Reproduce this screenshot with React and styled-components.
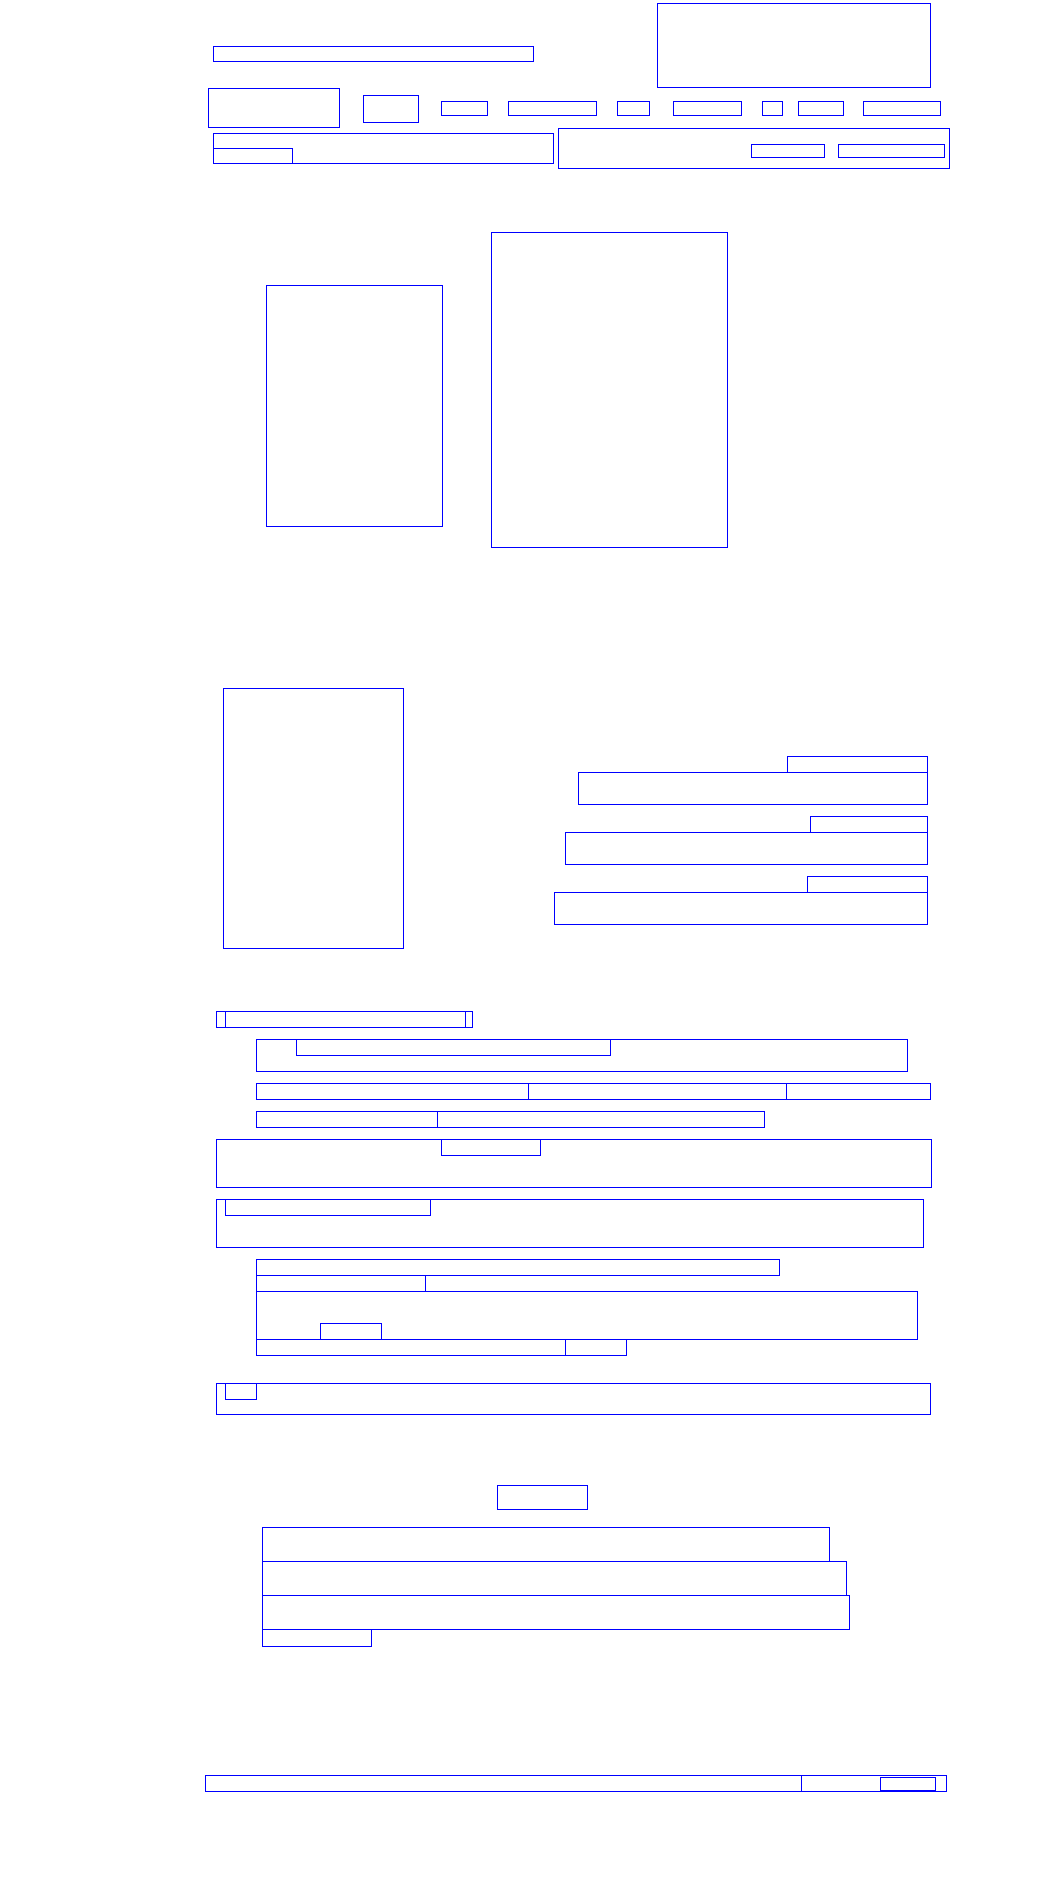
import styled, { createGlobalStyle, css } from 'styled-components';

const LINE = '#0000ff';

const outlined = css`
  border: 1px solid ${LINE};
`;

const GlobalStyle = createGlobalStyle`
  * { box-sizing: border-box; }
  html, body {
    margin: 0;
    padding: 0;
    background: #ffffff;
    font-family: 'Liberation Sans', Arial, sans-serif;
  }
`;

const Page = styled.div`
  width: 745px;
  margin-left: 205px;
  display: flex;
  flex-direction: column;
  align-items: flex-start;
`;

/* header */
const Masthead = styled.header`
  display: flex;
  align-items: flex-start;
  height: 88px;
`;
const SiteTitle = styled.div`
  ${outlined};
  margin: 46px 0 0 8px;
  width: 321px;
  height: 16px;
`;
const Banner = styled.div`
  ${outlined};
  margin: 3px 0 0 123px;
  width: 274px;
  height: 85px;
`;

const NavBar = styled.nav`
  display: flex;
  align-items: flex-start;
  height: 40px;
`;
const Logo = styled.div`
  ${outlined};
  margin-left: 3px;
  width: 132px;
  height: 40px;
`;
const SearchButton = styled.div`
  ${outlined};
  margin: 7px 0 0 23px;
  width: 56px;
  height: 28px;
`;
const NavLinks = styled.div`
  display: flex;
  margin-top: 13px;
`;
const NavLink = styled.a`
  ${outlined};
  display: block;
  margin-left: ${({ $gap }) => $gap}px;
  width: ${({ $w }) => $w}px;
  height: 15px;
`;

const SubBar = styled.div`
  display: flex;
  align-items: flex-start;
`;
const Breadcrumb = styled.div`
  ${outlined};
  display: flex;
  align-items: flex-end;
  margin: 5px 0 0 8px;
  width: 341px;
  height: 31px;
`;
const Crumb = styled.span`
  ${outlined};
  margin: 0 0 -1px -1px;
  width: 80px;
  height: 16px;
`;
const Toolbar = styled.div`
  ${outlined};
  display: flex;
  justify-content: flex-end;
  align-items: flex-start;
  gap: 13px;
  margin-left: 4px;
  padding: 15px 4px 0 0;
  width: 392px;
  height: 41px;
`;
const ToolButton = styled.button`
  ${outlined};
  background: none;
  padding: 0;
  width: ${({ $w }) => $w}px;
  height: 14px;
`;

/* gallery */
const Gallery = styled.section`
  display: flex;
  align-items: flex-start;
  margin-top: 63px;
`;
const Photo = styled.div`
  ${outlined};
  flex: none;
`;
const SmallPhoto = styled(Photo)`
  margin: 53px 0 0 61px;
  width: 177px;
  height: 242px;
`;
const LargePhoto = styled(Photo)`
  margin-left: 48px;
  width: 237px;
  height: 316px;
`;

/* feature with form */
const Feature = styled.section`
  align-self: stretch;
  display: flex;
  justify-content: space-between;
  align-items: flex-start;
  margin-top: 140px;
`;
const SidePanel = styled.aside`
  ${outlined};
  margin-left: 18px;
  width: 181px;
  height: 261px;
`;
const Fields = styled.div`
  display: flex;
  flex-direction: column;
  align-items: flex-end;
  margin: 68px 22px 0 0;
`;
const FieldGroup = styled.div`
  display: flex;
  flex-direction: column;
  align-items: flex-end;
  & + & { margin-top: 11px; }
`;
const FieldLabel = styled.label`
  ${outlined};
  display: block;
  width: ${({ $w }) => $w}px;
  height: 17px;
`;
const FieldInput = styled.div`
  ${outlined};
  margin-top: -1px;
  width: ${({ $w }) => $w}px;
  height: 33px;
`;

/* details */
const TabStrip = styled.div`
  ${outlined};
  display: flex;
  margin: 62px 0 0 11px;
  width: 257px;
  height: 17px;
`;
const TabLabel = styled.span`
  border-left: 1px solid ${LINE};
  border-right: 1px solid ${LINE};
  margin-left: 8px;
  width: 241px;
`;
const Card = styled.div`
  ${outlined};
  display: flex;
  align-items: flex-start;
  margin: 11px 0 0 51px;
  width: 652px;
  height: 33px;
`;
const Tag = styled.span`
  ${outlined};
  margin: -1px 0 0 ${({ $x }) => $x}px;
  width: ${({ $w }) => $w}px;
  height: 17px;
`;
const MetaRow = styled.div`
  display: flex;
  margin: ${({ $top = 11 }) => $top}px 0 0 ${({ $left = 51 }) => $left}px;
`;
const Cell = styled.div`
  ${outlined};
  display: flex;
  align-items: flex-start;
  width: ${({ $w }) => $w}px;
  height: 17px;
  & + & { margin-left: -1px; }
`;
const Notice = styled.div`
  ${outlined};
  display: flex;
  align-items: flex-start;
  margin: ${({ $top }) => $top}px 0 0 11px;
  width: ${({ $w }) => $w}px;
  height: ${({ $h }) => $h}px;
`;
const Post = styled.article`
  display: flex;
  flex-direction: column;
  align-items: flex-start;
  margin: 11px 0 0 51px;
`;
const PostLine = styled.div`
  ${outlined};
  width: ${({ $w }) => $w}px;
  height: 17px;
  & + & { margin-top: -1px; }
`;
const PostBody = styled.div`
  ${outlined};
  display: flex;
  align-items: flex-end;
  margin-top: -1px;
  width: 662px;
  height: 49px;
`;
const Chip = styled.span`
  ${outlined};
  margin: 0 0 -1px 63px;
  width: 62px;
  height: 17px;
`;

/* list */
const Heading = styled.h2`
  ${outlined};
  margin: 70px 0 0 292px;
  width: 91px;
  height: 25px;
`;
const ItemList = styled.ul`
  display: flex;
  flex-direction: column;
  align-items: flex-start;
  list-style: none;
  margin: 17px 0 0 57px;
  padding: 0;
`;
const Item = styled.li`
  ${outlined};
  width: ${({ $w }) => $w}px;
  height: ${({ $h = 35 }) => $h}px;
  & + & { margin-top: -1px; }
`;

/* footer */
const Footer = styled.footer`
  display: flex;
  margin-top: 128px;
`;
const FooterCell = styled.div`
  ${outlined};
  display: flex;
  align-items: flex-start;
  width: ${({ $w }) => $w}px;
  height: 17px;
  & + & { margin-left: -1px; }
`;
const FooterButton = styled.span`
  ${outlined};
  margin: 1px 0 0 78px;
  width: 56px;
  height: 14px;
`;

const navItems = [
  { w: 47, gap: 22 },
  { w: 89, gap: 20 },
  { w: 33, gap: 20 },
  { w: 69, gap: 23 },
  { w: 21, gap: 20 },
  { w: 46, gap: 15 },
  { w: 78, gap: 19 },
];

const fields = [
  { label: 141, input: 350 },
  { label: 118, input: 363 },
  { label: 121, input: 374 },
];

const App = () => (
  <>
    <GlobalStyle />
    <Page>
      <Masthead>
        <SiteTitle />
        <Banner />
      </Masthead>

      <NavBar>
        <Logo />
        <SearchButton />
        <NavLinks>
          {navItems.map((item, i) => (
            <NavLink key={i} $w={item.w} $gap={item.gap} />
          ))}
        </NavLinks>
      </NavBar>

      <SubBar>
        <Breadcrumb>
          <Crumb />
        </Breadcrumb>
        <Toolbar>
          <ToolButton $w={74} />
          <ToolButton $w={107} />
        </Toolbar>
      </SubBar>

      <Gallery>
        <SmallPhoto />
        <LargePhoto />
      </Gallery>

      <Feature>
        <SidePanel />
        <Fields>
          {fields.map((f, i) => (
            <FieldGroup key={i}>
              <FieldLabel $w={f.label} />
              <FieldInput $w={f.input} />
            </FieldGroup>
          ))}
        </Fields>
      </Feature>

      <TabStrip>
        <TabLabel />
      </TabStrip>
      <Card>
        <Tag $x={39} $w={315} />
      </Card>
      <MetaRow>
        <Cell $w={273} />
        <Cell $w={259} />
        <Cell $w={145} />
      </MetaRow>
      <MetaRow>
        <Cell $w={182} />
        <Cell $w={328} />
      </MetaRow>
      <Notice $top={11} $w={716} $h={49}>
        <Tag $x={224} $w={100} />
      </Notice>
      <Notice $top={11} $w={708} $h={49}>
        <Tag $x={8} $w={206} />
      </Notice>
      <Post>
        <PostLine $w={524} />
        <PostLine $w={170} />
        <PostBody>
          <Chip />
        </PostBody>
        <MetaRow $top={-1} $left={0}>
          <Cell $w={310} />
          <Cell $w={62} />
        </MetaRow>
      </Post>
      <Notice $top={27} $w={715} $h={32}>
        <Tag $x={8} $w={32} />
      </Notice>

      <Heading />
      <ItemList>
        <Item $w={568} />
        <Item $w={585} />
        <Item $w={588} />
        <Item $w={110} $h={18} />
      </ItemList>

      <Footer>
        <FooterCell $w={597} />
        <FooterCell $w={146}>
          <FooterButton />
        </FooterCell>
      </Footer>
    </Page>
  </>
);

export default App;
